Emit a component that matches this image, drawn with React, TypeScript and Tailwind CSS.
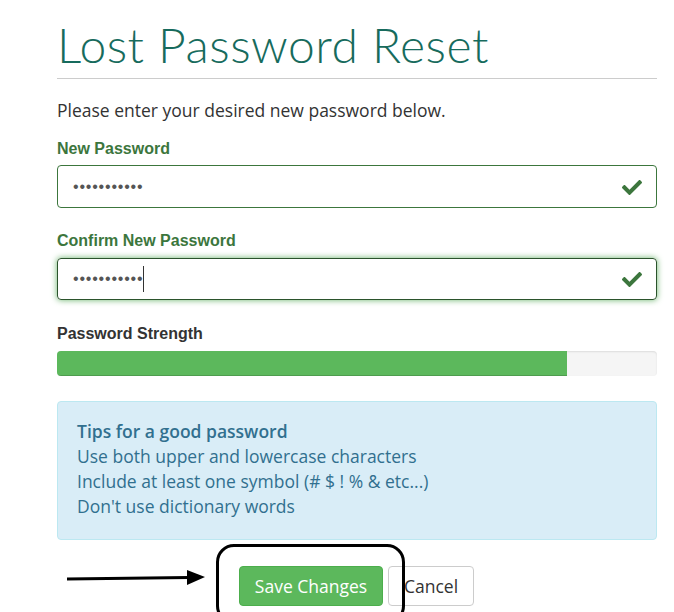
function CheckMark() {
    return (
        <svg width="20" height="16" viewBox="0 0 512 410" className="text-[#3c763d]" fill="currentColor">
            <path d="M173.9 400.6L7.5 234.2c-10-10-10-26.2 0-36.2l36.2-36.2c10-10 26.2-10 36.2 0L192 273.9 432.1 33.8c10-10 26.2-10 36.2 0l36.2 36.2c10 10 10 26.2 0 36.2L210.1 400.6c-10 10-26.2 10-36.2 0z" />
        </svg>
    )
}

export default function App() {
    const strength = 85

    return (
        <div className="w-[674px] h-[612px] overflow-hidden bg-white font-['Open_Sans',sans-serif]">
            <div className="pl-[57px] w-[657px]">
                <h1 className="pt-[17px] text-[48px] leading-[56px] font-light text-[#176b5d] font-['Lato',sans-serif] tracking-[0.5px]">
                    Lost Password Reset
                </h1>
                <div className="mt-[5px] h-px bg-[#cccccc]" />

                <p className="mt-[19px] text-[17.5px] leading-[24px] text-[#333333]">
                    Please enter your desired new password below.
                </p>

                <label className="block mt-[17px] text-[16px] leading-[20px] font-bold text-[#3c763d] font-['Liberation_Sans',sans-serif]">
                    New Password
                </label>
                <div className="mt-[6px] h-[43px] flex items-center justify-between rounded-[4px] border border-[#3c763d] pl-[15px] pr-[14px]">
                    <span className="text-[16px] tracking-[0.8px] text-[#555] font-['Liberation_Sans',sans-serif]">•••••••••••</span>
                    <CheckMark />
                </div>

                <label className="block mt-[23px] text-[16px] leading-[20px] font-bold text-[#3c763d] font-['Liberation_Sans',sans-serif]">
                    Confirm New Password
                </label>
                <div className="mt-[7px] h-[42px] flex items-center justify-between rounded-[4px] border border-[#2b542c] pl-[15px] pr-[14px] shadow-[0_0_6px_#67b168]">
                    <span className="flex items-center text-[16px] tracking-[0.8px] text-[#555] font-['Liberation_Sans',sans-serif]">
                        •••••••••••
                        <span className="w-px h-[26px] bg-[#333]" />
                    </span>
                    <CheckMark />
                </div>

                <label className="block mt-[24px] text-[16px] leading-[20px] font-bold text-[#333333] font-['Liberation_Sans',sans-serif]">
                    Password Strength
                </label>
                <div className="mt-[7px] h-[25px] rounded-[4px] bg-[#f5f5f5] overflow-hidden shadow-[inset_0_1px_2px_rgba(0,0,0,0.1)]">
                    <div className="h-full bg-[#5cb85c] shadow-[inset_0_-1px_0_rgba(0,0,0,0.15)]" style={{ width: `${strength}%` }} />
                </div>

                <div className="mt-[25px] h-[139px] rounded-[4px] border border-[#bce8f1] bg-[#d9edf7] px-[19px] pt-[17px] text-[#31708f] text-[17.5px] leading-[25px]">
                    <div className="font-semibold">Tips for a good password</div>
                    <div>Use both upper and lowercase characters</div>
                    <div>Include at least one symbol (# $ ! % &amp; etc...)</div>
                    <div>Don't use dictionary words</div>
                </div>

                <div className="relative mt-[26px] flex items-center">
                    <button className="ml-[182px] w-[144px] h-[40px] rounded-[4px] bg-[#5cb85c] border border-[#4cae4c] text-white text-[17.5px]">
                        Save Changes
                    </button>
                    <button className="ml-[5px] w-[86px] h-[40px] rounded-[4px] bg-white border border-[#cccccc] text-[#333333] text-[17.5px]">
                        Cancel
                    </button>

                    <div className="absolute left-[159px] top-[-22px] w-[189px] h-[80px] rounded-[18px] border-[3px] border-black" />
                    <svg className="absolute left-[10px] top-[4px]" width="140" height="18" viewBox="0 0 140 18">
                        <line x1="0" y1="9" x2="122" y2="7.5" stroke="black" strokeWidth="3" />
                        <path d="M120 0 L138 7 L120 15 Z" fill="black" />
                    </svg>
                </div>
            </div>
        </div>
    )
}
